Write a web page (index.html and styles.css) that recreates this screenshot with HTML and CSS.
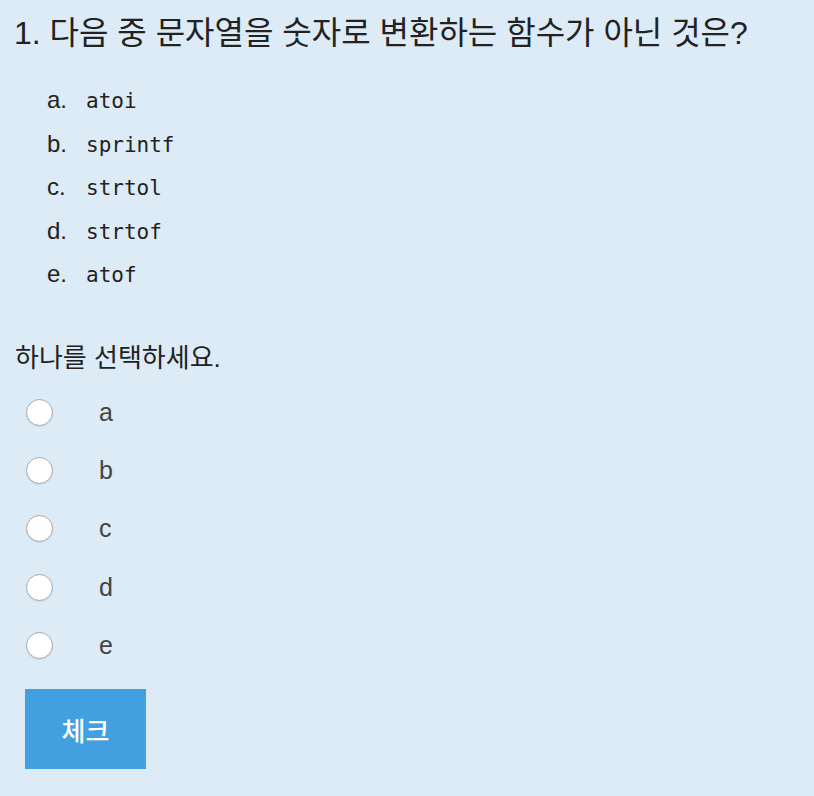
FILE: index.html
```html
<!DOCTYPE html>
<html lang="ko">
<head>
<meta charset="utf-8">
<link rel="stylesheet" href="styles.css">
</head>
<body>
<div class="page">
  <h1 class="title">1. 다음 중 문자열을 숫자로 변환하는 함수가 아닌 것은?</h1>
  <ol class="choices">
    <li><span class="mark">a.</span><code>atoi</code></li>
    <li><span class="mark">b.</span><code>sprintf</code></li>
    <li><span class="mark">c.</span><code>strtol</code></li>
    <li><span class="mark">d.</span><code>strtof</code></li>
    <li><span class="mark">e.</span><code>atof</code></li>
  </ol>
  <p class="prompt">하나를 선택하세요.</p>
  <div class="answers">
    <label class="answer"><span class="radio"></span><span class="alabel">a</span></label>
    <label class="answer"><span class="radio"></span><span class="alabel">b</span></label>
    <label class="answer"><span class="radio"></span><span class="alabel">c</span></label>
    <label class="answer"><span class="radio"></span><span class="alabel">d</span></label>
    <label class="answer"><span class="radio"></span><span class="alabel">e</span></label>
  </div>
  <button class="check">체크</button>
</div>
</body>
</html>
```
FILE: styles.css
```css
html, body {
  margin: 0;
  padding: 0;
  background: #dcebf6;
}
body {
  font-family: "Liberation Sans", "Noto Sans CJK KR", sans-serif;
  color: #222;
}
.page {
  padding: 13px 0 0 15px;
  height: 783px;
}
.title {
  margin: 0 0 0 -1px;
  font-size: 32px;
  font-weight: normal;
  line-height: 40px;
  color: #222;
}
.choices {
  list-style: none;
  margin: 25px 0 0 0;
  padding: 0 0 0 32px;
}
.choices li {
  display: flex;
  align-items: baseline;
  height: 43.6px;
  line-height: 43.6px;
}
.mark {
  font-size: 24px;
  width: 39px;
  color: #222;
}
.choices code {
  font-family: "DejaVu Sans Mono", monospace;
  font-size: 21px;
  color: #222;
}
.prompt {
  margin: 47px 0 0 0;
  font-size: 26px;
  line-height: 30px;
  color: #222;
}
.answers {
  margin-top: 10px;
  display: flex;
  flex-direction: column;
}
.answer {
  display: flex;
  align-items: center;
  height: 58.3px;
}
.radio {
  box-sizing: border-box;
  width: 27px;
  height: 27px;
  border-radius: 50%;
  margin-left: 11px;
  border: 1px solid #a9a9a9;
  background: radial-gradient(circle at 50% 40%, #ffffff 60%, #f0f0f0 100%);
  box-shadow: 0 1px 1px rgba(0,0,0,0.08);
}
.alabel {
  margin-left: 46px;
  font-size: 25px;
  color: #444;
}
.check {
  display: block;
  margin: 15px 0 0 10px;
  width: 121px;
  height: 80px;
  border: none;
  background: #429fe0;
  color: #fff;
  font-family: "Noto Sans CJK KR", sans-serif;
  font-size: 26px;
  font-weight: 500;
  padding: 0;
}
```
